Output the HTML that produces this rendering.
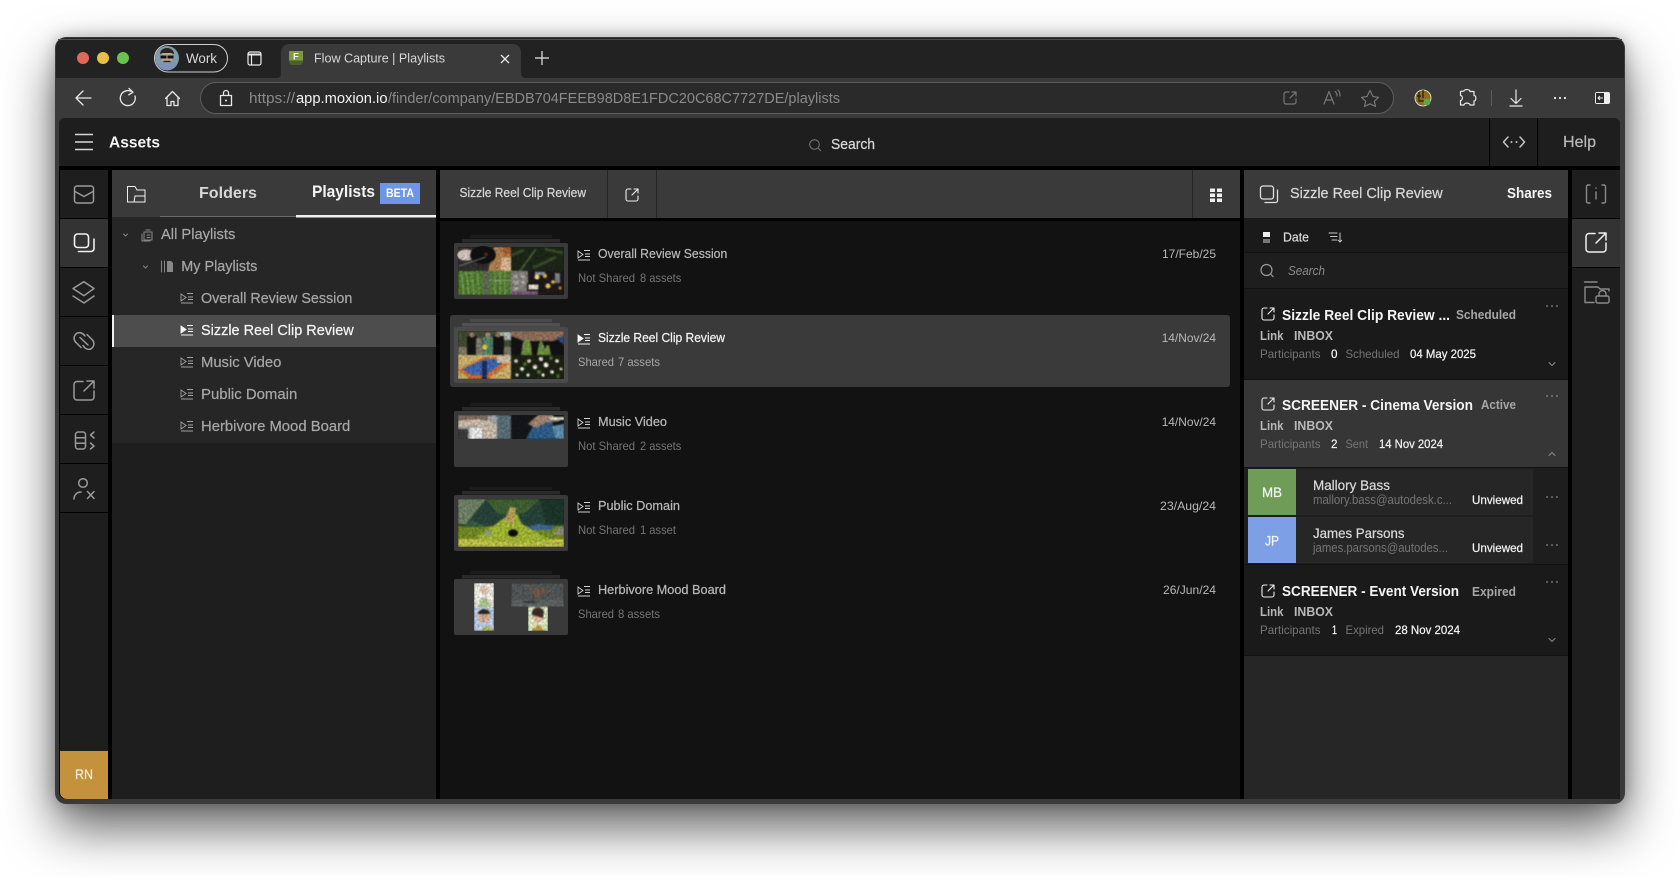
<!DOCTYPE html>
<html lang="en"><head><meta charset="utf-8"><title>Flow Capture | Playlists</title>
<style>
html,body{margin:0;padding:0;width:1680px;height:877px;overflow:hidden;background:#fff}
#w{position:absolute;left:55px;top:37px;width:1570px;height:767px;border-radius:11px;background:#3a3a3a;box-shadow:0 24px 50px rgba(0,0,0,.62),0 0 16px rgba(0,0,0,.25)}
svg{position:absolute;left:0;top:0}
text{font-family:"Liberation Sans",sans-serif;stroke-width:0}
.m{stroke-width:.22}
.b{font-weight:700}
.i{font-style:italic}
.wh{fill:#f4f4f4;stroke:#f4f4f4}
.l1{fill:#d8d8d8;stroke:#d8d8d8}
.l2{fill:#b8b8b8;stroke:#b8b8b8}
.l3{fill:#a6a6a6;stroke:#a6a6a6}
.g1{fill:#8a8a8a;stroke:#8a8a8a}
.g2{fill:#757575;stroke:#757575}
.ic{fill:none;stroke-linecap:round;stroke-linejoin:round}
</style></head><body>
<div id="w"></div>
<svg width="1680" height="877" viewBox="0 0 1680 877" xmlns="http://www.w3.org/2000/svg">
<defs>
<filter id="s" x="0" y="0" width="100%" height="100%" color-interpolation-filters="sRGB">
<feGaussianBlur in="SourceGraphic" stdDeviation=".7" result="bl"/>
<feTurbulence type="fractalNoise" baseFrequency=".4" numOctaves="2" seed="4" result="tn"/>
<feColorMatrix in="tn" type="matrix" values="1 0 0 0 0  1 0 0 0 0  1 0 0 0 0  0 0 0 0 1" result="gn"/>
<feComposite in="bl" in2="gn" operator="arithmetic" k1="0.55" k2="0.72" k3="0" k4="0" result="tx"/>
<feComposite in="tx" in2="SourceAlpha" operator="in"/>
</filter>
<g id="pl"><path d="M0 -4L5 -.5L0 3Z"/><path d="M6 -4.500H12M7 -1H12M7 1.500H12M0 5H12" fill="none"/></g>
<g id="sh" class="ic"><path d="M5 0H2A2 2 0 0 0 0 2V10A2 2 0 0 0 2 12H10A2 2 0 0 0 12 10V7"/><path d="M6 6L12 0M8 0H12V4"/></g>
</defs>

<!-- browser chrome -->
<path d="M56 48a10 10 0 0 1 10-10H1614a10 10 0 0 1 10 10V78H56Z" fill="#222"/>
<path d="M58 39.500H1622" stroke="#4d4d4d" stroke-width="1"/>
<path d="M278 78a5 5 0 0 0 3-5V52a8 8 0 0 1 8-8H513a8 8 0 0 1 8 8V73a5 5 0 0 0 4 5Z" fill="#3a3a3a"/>
<circle cx="83" cy="58" r="6" fill="#e0695a"/><circle cx="103" cy="58" r="6" fill="#e8bf45"/><circle cx="123" cy="58" r="6" fill="#6cc24f"/>
<rect x="154.500" y="44.500" width="73" height="27.500" rx="13.700" fill="#222" stroke="#cfcfcf"/>
<circle cx="167" cy="58" r="12" fill="#7f9aa8"/><path d="M157 65a11 8 0 0 1 20 0a12 12 0 0 1-20 0Z" fill="#7d93b8"/><circle cx="167" cy="57" r="6" fill="#c2a48c"/><path d="M160 54a7 6 0 0 1 14 0l-3-1h-8Z" fill="#2b2420"/><path d="M160.500 55.500h6v3h-6zM167.500 55.500h6v3h-6z" fill="#111"/><path d="M163.500 61.500h7" stroke="#2b2420" stroke-width="1.500"/>
<text x="186" y="63" font-size="14" textLength="31" lengthAdjust="spacingAndGlyphs" class="l1">Work</text>
<rect x="248" y="52" width="13" height="13" rx="2" fill="none" stroke="#e8e8e8" stroke-width="1.200"/><path d="M248 54.500H261" stroke="#e8e8e8" stroke-width="2"/><path d="M251.500 55V65" stroke="#e8e8e8" stroke-width="1.200"/>
<path d="M289 51H303V62L301 65H291L289 62Z" fill="#7f9a3e"/><path d="M289 60.500H303V62L301 65H291L289 62Z" fill="#4a5f2a"/><text x="293" y="59.500" font-size="9.500" class="b wh">F</text>
<text x="314" y="62.500" font-size="13" textLength="131" lengthAdjust="spacingAndGlyphs" class="l1">Flow Capture | Playlists</text>
<path d="M501 55L509 63M509 55L501 63" stroke="#e8e8e8" stroke-width="1.300" fill="none"/>
<path d="M542 51V65M535 58H549" stroke="#e8e8e8" stroke-width="1.200" fill="none"/>

<rect x="56" y="78" width="1568" height="46" fill="#3a3a3a"/>
<rect x="200.500" y="82.500" width="1193" height="31" rx="15.500" fill="#2a2a2a" stroke="#5d5d5d"/>
<g class="ic" stroke="#e8e8e8" stroke-width="1.300">
<path d="M76 98H91M83 91L76 98L83 105"/>
<path d="M135 96A7.500 7.500 0 1 1 131 91.300M129 88.500L133 92.200L128.800 94.800"/>
<path d="M165.500 98.500L172.500 91.500L179.500 98.500M167 97.500V105.500H171V101.500H174V105.500H178V97.500"/>
<path d="M220.500 95.500H231.500V105.500H220.500ZM223.500 95.500V93A2.500 2.500 0 0 1 228.500 93V95.500"/>
</g>
<circle cx="226" cy="100.500" r="1" fill="#e8e8e8"/>
<text x="249" y="103" font-size="14.500" textLength="46" lengthAdjust="spacingAndGlyphs" class="g1">https://</text>
<text x="296" y="103" font-size="14.500" textLength="91.500" lengthAdjust="spacingAndGlyphs" class="wh">app.moxion.io</text>
<text x="388" y="103" font-size="14.500" textLength="452" lengthAdjust="spacingAndGlyphs" class="g1">/finder/company/EBDB704FEEB98D8E1FDC20C68C7727DE/playlists</text>
<g class="ic" stroke="#777" stroke-width="1.200">
<path d="M1289 92H1286A2 2 0 0 0 1284 94V102A2 2 0 0 0 1286 104H1294A2 2 0 0 0 1296 102V99M1290 98L1296 92M1292 92H1296V96"/>
<path d="M1324 104L1329 91.500L1334 104M1326 100H1332M1335 91.500A5 5 0 0 1 1337 96M1338 90A8 8 0 0 1 1340 96"/>
<path d="M1370 90.500L1373 96.500L1378.500 97.300L1374.300 101.300L1375.500 106.500L1370 103.800L1364.500 106.500L1365.700 101.300L1361.500 97.300L1367 96.500Z"/>
</g>
<circle cx="1423" cy="98" r="8" fill="#8f6e18" stroke="#eee" stroke-width=".8"/><path d="M1419 92V101H1427M1423 90V98M1417 96H1421" stroke="#1a1a1a" stroke-width="1.200" fill="none"/><circle cx="1427" cy="102" r="3.500" fill="#5fa64c"/>
<path class="ic" stroke="#e8e8e8" stroke-width="1.200" d="M1464 91C1464 89 1470 89 1470 91.500H1474V95.500C1476.500 95.500 1476.500 101 1474 101V105H1470C1470 102.500 1464 102.500 1464 105H1460.500V100.500C1463 100.500 1463 95.500 1460.500 95.500V91.500Z"/>
<path d="M1491.500 90V106" stroke="#5d5d5d"/>
<path class="ic" stroke="#e8e8e8" stroke-width="1.200" d="M1516 90V103M1511 98.500L1516 103.500L1521 98.500M1510 106H1522"/>
<circle cx="1555" cy="98" r="1.100" fill="#eee"/><circle cx="1560" cy="98" r="1.100" fill="#eee"/><circle cx="1565" cy="98" r="1.100" fill="#eee"/>
<rect x="1595" y="92" width="15" height="12" rx="2" fill="#eee"/><rect x="1596" y="93" width="8" height="10" fill="#2a2a2a"/><path d="M1603 98H1598M1600 96L1598 98L1600 100" stroke="#eee" fill="none"/>

<!-- app -->
<path d="M59 124a6 6 0 0 1 6-6H1614a6 6 0 0 1 6 6V799H66a7 7 0 0 1-7-7Z" fill="#000"/>
<path d="M59 124a6 6 0 0 1 6-6H1614a6 6 0 0 1 6 6V166H59Z" fill="#1e1e1e"/>
<path d="M75 134.500H93M75 142H93M75 149.500H93" stroke="#d8d8d8" stroke-width="1.500"/>
<text x="109" y="147.500" font-size="16" textLength="51" lengthAdjust="spacingAndGlyphs" class="b wh">Assets</text>
<circle cx="814.500" cy="144.500" r="4.800" fill="none" stroke="#777"/><path d="M818 148L821 151" stroke="#777"/>
<text x="831" y="149" font-size="14.500" textLength="44" lengthAdjust="spacingAndGlyphs" class="m l1">Search</text>
<path d="M1489.500 118V166M1537.500 118V166" stroke="#000"/>
<path class="ic" stroke="#c4c4c4" stroke-width="1.500" d="M1508 137L1503.500 142L1508 147M1520 137L1524.500 142L1520 147"/><circle cx="1511.500" cy="142" r="1" fill="#c4c4c4"/><circle cx="1516.500" cy="142" r="1" fill="#c4c4c4"/>
<text x="1563" y="147" font-size="15.500" textLength="33" lengthAdjust="spacingAndGlyphs" class="m l2">Help</text>

<!-- left rail -->
<path d="M60 170H108V799H67a7 7 0 0 1-7-7Z" fill="#1e1e1e"/>
<rect x="60" y="219" width="48" height="48" fill="#333"/>
<path d="M60 218.500H108M60 267.500H108M60 316.500H108M60 365.500H108M60 414.500H108M60 463.500H108M60 512.500H108" stroke="#000"/>
<g class="ic" stroke="#9a9a9a" stroke-width="1.500">
<rect x="74.500" y="186" width="19" height="17" rx="2.500"/><path d="M75 191.500L84 196.500L93 191.500"/>
<path d="M84 281.700L94 288.500L84 295.700L73 288.500ZM73 296L84 303L94 296"/>
<path d="M85 336C83 333 79 331.500 76.500 333.500C73.500 336 73.500 339.500 75.500 342L81 347.500M83 345.500C85 349 89 350.500 91.500 348.500C94.500 346 94.500 342.500 92.500 340L87 334.500M80 337.500L88 345"/>
<path d="M83 381.500H77A3 3 0 0 0 74 384.500V397A3 3 0 0 0 77 400H91A3 3 0 0 0 94 397V391M84 391L94 381M87 381H94V388"/>
<rect x="75.500" y="432" width="10" height="17" rx="2.500"/><path d="M75.500 437.700H85.500M75.500 443.300H85.500M94 432L90.500 435L94 438M90.500 443L94 446L90.500 449"/>
<circle cx="83" cy="483" r="4.300"/><path d="M74 499C74 495 77 492 81 492M87.500 491.500L94 498.500M94 491.500L87.500 498.500"/>
</g>
<g class="ic" stroke="#f0f0f0" stroke-width="1.600"><rect x="74.500" y="234" width="14" height="13.500" rx="3"/><path d="M94 239V248.500A3 3 0 0 1 91 251.500H78.500"/></g>
<path d="M60 751H108V799H67a7 7 0 0 1-7-7Z" fill="#c4913c"/>
<text x="75" y="779" font-size="14" textLength="18" lengthAdjust="spacingAndGlyphs" class="m" fill="#f2ead9" stroke="#f2ead9">RN</text>

<!-- left panel -->
<rect x="112" y="170" width="324" height="629" fill="#1e1e1e"/>
<rect x="112" y="170" width="324" height="47" fill="#3a3a3a"/>
<rect x="112" y="217" width="324" height="226" fill="#262626"/>
<path d="M160 216.500H296" stroke="#6a6a6a"/><rect x="296" y="215" width="140" height="2.500" fill="#f0f0f0"/>
<g class="ic" stroke="#f0f0f0"><path d="M127.500 202V186.500H135L137 190H145V202ZM134 202L135 196H145"/></g>
<text x="199" y="198" font-size="16" textLength="58" lengthAdjust="spacingAndGlyphs" class="b l1">Folders</text>
<text x="312" y="197" font-size="17" textLength="63" lengthAdjust="spacingAndGlyphs" class="b wh">Playlists</text>
<rect x="380" y="183" width="40" height="21" fill="#6d96e8"/>
<text x="386" y="197" font-size="11.500" textLength="28" lengthAdjust="spacingAndGlyphs" class="b" fill="#fff">BETA</text>
<rect x="112" y="315" width="324" height="32" fill="#4d4d4d"/><rect x="112" y="315" width="2" height="32" fill="#f0f0f0"/>
<g class="ic" stroke="#888"><path d="M123.500 234L125.500 236L127.500 234M143.500 266L145.500 268L147.500 266"/>
<path d="M144 232H152V240H144ZM142 234V241H150M147 235H150M147 237.500H150M146 230H150"/>
<path d="M161.500 261V272M164.500 261V272"/></g>
<path d="M167 261H171L173 263V272H167Z" fill="#888"/>
<text x="161" y="239" font-size="14.500" textLength="74.300" lengthAdjust="spacingAndGlyphs" class="m l3">All Playlists</text>
<text x="181.300" y="271" font-size="14.500" textLength="76" lengthAdjust="spacingAndGlyphs" class="m l3">My Playlists</text>
<text x="201" y="303" font-size="14.500" textLength="151.300" lengthAdjust="spacingAndGlyphs" class="m l3">Overall Review Session</text>
<text x="201" y="335" font-size="14.500" textLength="152.700" lengthAdjust="spacingAndGlyphs" class="m wh">Sizzle Reel Clip Review</text>
<text x="201" y="367" font-size="14.500" textLength="80.300" lengthAdjust="spacingAndGlyphs" class="m l3">Music Video</text>
<text x="201" y="399" font-size="14.500" textLength="96.300" lengthAdjust="spacingAndGlyphs" class="m l3">Public Domain</text>
<text x="201" y="431" font-size="14.500" textLength="149.300" lengthAdjust="spacingAndGlyphs" class="m l3">Herbivore Mood Board</text>
<g stroke="#a0a0a0" fill="none" stroke-width=".9">
<use href="#pl" x="181" y="298"/><use href="#pl" x="181" y="362"/><use href="#pl" x="181" y="394"/><use href="#pl" x="181" y="426"/>
</g>
<use href="#pl" x="181" y="330" stroke="#f4f4f4" fill="#f4f4f4" stroke-width=".9"/>

<!-- center panel -->
<rect x="440" y="170" width="800" height="629" fill="#121212"/>
<rect x="440" y="170" width="800" height="48" fill="#3a3a3a"/>
<rect x="440" y="218" width="800" height="3" fill="#000"/>
<path d="M607.500 170V218M656.500 170V218M1192.500 170V218" stroke="#262626"/>
<text x="459.500" y="197" font-size="13" textLength="126.500" lengthAdjust="spacingAndGlyphs" class="m l1">Sizzle Reel Clip Review</text>
<use href="#sh" x="626" y="189" stroke="#eee" stroke-width="1.100"/>
<g fill="#f0f0f0"><rect x="1210" y="188.500" width="5" height="3.500"/><rect x="1217" y="188.500" width="5" height="3.500"/><rect x="1210" y="193.500" width="5" height="3.500"/><rect x="1217" y="193.500" width="5" height="3.500"/><rect x="1210" y="198.500" width="5" height="3.500"/><rect x="1217" y="198.500" width="5" height="3.500"/></g>
<rect x="450" y="315" width="780" height="72" rx="3" fill="#3a3a3a"/>

<g fill="#1c1c1c"><rect x="470" y="235" width="82" height="3"/><rect x="470" y="319" width="82" height="3" fill="#4a4a4a"/><rect x="470" y="403" width="82" height="3"/><rect x="470" y="487" width="82" height="3"/><rect x="470" y="571" width="82" height="3"/></g>
<g fill="#2a2a2a"><rect x="462" y="239" width="98" height="3.500"/><rect x="462" y="323" width="98" height="3.500" fill="#515151"/><rect x="462" y="407" width="98" height="3.500"/><rect x="462" y="491" width="98" height="3.500"/><rect x="462" y="575" width="98" height="3.500"/></g>
<g fill="#3a3a3a"><rect x="454" y="243" width="114" height="56" rx="2"/><rect x="454" y="327" width="114" height="56" rx="2" fill="#4a4a4a"/><rect x="454" y="411" width="114" height="56" rx="2"/><rect x="454" y="495" width="114" height="56" rx="2"/><rect x="454" y="579" width="114" height="56" rx="2"/></g>

<g filter="url(#s)">
<!-- thumb 1 -->
<rect x="458" y="247" width="53" height="24" fill="#2e2d2b"/>
<path d="M494 247H511V271H488Z" fill="#a87a4c"/><rect x="501" y="258" width="10" height="13" fill="#cfae88"/><rect x="503" y="247" width="8" height="7" fill="#a4582a"/>
<ellipse cx="466" cy="255" rx="9" ry="5.500" fill="#cdbfb8"/><ellipse cx="483" cy="255" rx="13" ry="9" fill="#0f0f0f"/><path d="M459 266L486 257" stroke="#8a8a8a" stroke-width=".8"/><circle cx="486" cy="254" r="1.500" fill="#7a2a20"/>
<rect x="511" y="247" width="53" height="24" fill="#1b2416"/><path d="M520 271L536 249" stroke="#4f6236" stroke-width="1.500"/><path d="M533 268L556 257M512 255L524 250M545 249L563 253" stroke="#35472a" stroke-width="3"/>
<rect x="458" y="271" width="53" height="24" fill="#4f7430"/><path d="M461 271L464 295M466 271L469 295M471 271L474 295M477 271L479 295M495 271V295M500 271V295M505 271V295" stroke="#6e9a48" stroke-width="1.400"/><rect x="484" y="271" width="4.500" height="24" fill="#5d625a"/><path d="M488 280.500H511" stroke="#8a8f88"/>
<rect x="511" y="271" width="53" height="24" fill="#1c1819"/><rect x="511" y="271" width="17" height="24" fill="#7d7a76"/><path d="M514 275h4v3h-4zM521 275h4v3h-4zM514 281h4v3h-4zM521 281h4v3h-4zM514 287h4v3h-4z" fill="#a9a7a0"/>
<rect x="527" y="283" width="13" height="8" fill="#0e0e0e"/><rect x="528.500" y="284.500" width="10" height="5" fill="#d4cfc0"/><rect x="511" y="291" width="27" height="4" fill="#7a5578"/>
<rect x="535" y="272" width="10" height="3" fill="#8f9aa8"/><circle cx="537" cy="277" r="2.500" fill="#e8d070"/><circle cx="545" cy="276" r="2" fill="#d9a53e"/><circle cx="548" cy="286" r="2.500" fill="#eac650"/><circle cx="553" cy="282" r="1.800" fill="#e8c050"/><rect x="555" y="273" width="5" height="10" fill="#777a7c"/><circle cx="560" cy="288" r="1.500" fill="#c88a30"/>
<!-- thumb 2 -->
<rect x="458" y="331" width="53" height="24" fill="#3f4632"/><rect x="458" y="347" width="53" height="8" fill="#77735e"/><rect x="497" y="332" width="14" height="8" fill="#a6b0a4"/>
<path d="M467 336h10v19h-10zM493 336h11v19h-11z" fill="#131313"/><rect x="476" y="338" width="6" height="17" fill="#77776a"/><rect x="483" y="337" width="10" height="18" fill="#4f7c66"/><circle cx="472" cy="335" r="2.500" fill="#9a7a60"/><circle cx="488" cy="335" r="2.500" fill="#a88a70"/><circle cx="498" cy="335" r="2.500" fill="#8a6a50"/><circle cx="485" cy="347" r="2.500" fill="#d8c040"/>
<rect x="511" y="331" width="53" height="24" fill="#111112"/><path d="M511 331H564V337L553 341L524 341L511 336Z" fill="#8a6a58"/><path d="M556 338L564 336V345Z" fill="#2a4a78"/><path d="M521 355L523 342L528 338L531 344L532 355ZM537 355L539 344L541 340L544 346L546 355ZM543 355L546 346L549 345L551 355Z" fill="#6a8a40"/>
<rect x="458" y="355" width="53" height="24" fill="#c2a868"/><path d="M458 370L484 357H511V362L488 379H470Z" fill="#c8682e"/><path d="M462 369L485 359H508L486 375H472Z" fill="#3b62a8"/><rect x="482" y="361" width="5" height="18" fill="#1c2a58"/><rect x="497" y="355" width="14" height="8" fill="#c4b59c"/>
<rect x="511" y="355" width="53" height="24" fill="#1b2012"/>
<g fill="#e4e2d4"><circle cx="516" cy="361" r="1.800"/><circle cx="522" cy="369" r="2"/><circle cx="529" cy="361" r="1.800"/><circle cx="535" cy="367" r="2.200"/><circle cx="541" cy="359" r="2"/><circle cx="546" cy="365" r="2.500"/><circle cx="552" cy="372" r="1.800"/><circle cx="557" cy="361" r="1.800"/><circle cx="528" cy="375" r="1.600"/><circle cx="543" cy="375" r="1.600"/><circle cx="561" cy="369" r="1.400"/><circle cx="517" cy="375" r="1.500"/></g>
<g fill="#4f7030"><circle cx="525" cy="364" r="1.800"/><circle cx="539" cy="372" r="2"/><circle cx="551" cy="358" r="1.800"/><circle cx="558" cy="376" r="1.800"/></g>
<!-- thumb 3 -->
<rect x="458" y="415" width="53" height="24" fill="#9a9e9c"/><rect x="458" y="415" width="30" height="6" fill="#7a6a5c"/><path d="M458 421L478 419L492 422L500 428L494 439H484L478 426L458 427Z" fill="#c0b2a2"/><rect x="458" y="429" width="10" height="10" fill="#3a3a3a"/><rect x="470" y="428" width="12" height="11" fill="#dedede"/><rect x="497" y="415" width="14" height="24" fill="#566a72"/>
<rect x="511" y="415" width="53" height="24" fill="#141518"/><path d="M526 439L534 424L552 422L556 439Z" fill="#2c5a84"/><path d="M528 424L538 415H552L560 421L545 423L536 428Z" fill="#9a7e6c"/><path d="M552 426L564 424V439H556Z" fill="#5a8aa8"/><path d="M548 417H564V420H552Z" fill="#cfd8c4"/>
<!-- thumb 4 -->
<rect x="458" y="499" width="106" height="48" fill="#254036"/>
<path d="M458 499H486L466 524H458Z" fill="#6a7c62"/><path d="M486 499H540L524 514H498Z" fill="#3d5c30"/><path d="M540 499H564V524H546Z" fill="#1b3328"/>
<rect x="458" y="526" width="106" height="21" fill="#6f8422"/><rect x="458" y="539" width="106" height="8" fill="#b4b844"/>
<path d="M461 527L472 520L488 527Z" fill="#35593a"/><path d="M526 527L538 524L556 527L550 530H530Z" fill="#3d6490"/>
<path d="M476 538C488 530 498 522 509 515L517 514L522 524C532 530 540 535 552 540C530 544 500 543 476 538Z" fill="#9aae30"/>
<path d="M504 522L510 507L516 508L514 524Z" fill="#b09a54"/><ellipse cx="513" cy="533" rx="5" ry="3.800" fill="#0d0d0d"/><ellipse cx="488" cy="533" rx="4" ry="2" fill="#8f8f88"/><path d="M552 535L560 527L564 527V535Z" fill="#8a8678"/>
<!-- thumb 5 -->
<rect x="474" y="583" width="20" height="24" fill="#e2e2da"/><circle cx="484" cy="590" r="4" fill="#d4b8a0"/><path d="M478 607L481 598H488L491 607Z" fill="#a8bc88"/>
<rect x="474" y="607" width="20" height="24" fill="#b4c6de"/><circle cx="484" cy="617" r="6" fill="#c8a48c"/><path d="M478 614a6 5 0 0 1 12 0Z" fill="#2a2620"/><path d="M480 631L488 625L494 631Z" fill="#a8b060"/>
<rect x="528" y="607" width="20" height="24" fill="#d4e2bc"/><circle cx="538" cy="617" r="5.500" fill="#d8b09c"/><path d="M532 615a6 6 0 0 1 12-3l-1 6Z" fill="#3a2a22"/><path d="M531 631L538 624L546 631Z" fill="#b49a48"/>
<rect x="511" y="583" width="53" height="24" rx="1" fill="#4d5252"/><rect x="511" y="600" width="53" height="7" fill="#5a5e5e"/>
<path d="M525 584L534 589L541 588L553 592L541 594L538 601L535 596L531 591Z" fill="#6a5444"/><ellipse cx="530" cy="602" rx="8" ry="1" fill="#333"/>
</g>

<!-- center text -->
<g stroke="#d0d0d0" stroke-width=".9" fill="none"><use href="#pl" x="578" y="255"/><use href="#pl" x="578" y="423"/><use href="#pl" x="578" y="507"/><use href="#pl" x="578" y="591"/></g>
<use href="#pl" x="578" y="339" stroke="#f4f4f4" fill="#f4f4f4" stroke-width=".9"/>
<g font-size="13">
<text x="598" y="258" textLength="129.300" lengthAdjust="spacingAndGlyphs" class="m l2">Overall Review Session</text>
<text x="598" y="342" textLength="127" lengthAdjust="spacingAndGlyphs" class="m wh">Sizzle Reel Clip Review</text>
<text x="598" y="426" textLength="69" lengthAdjust="spacingAndGlyphs" class="m l2">Music Video</text>
<text x="598" y="510" textLength="82" lengthAdjust="spacingAndGlyphs" class="m l2">Public Domain</text>
<text x="598" y="594" textLength="128" lengthAdjust="spacingAndGlyphs" class="m l2">Herbivore Mood Board</text>
</g>
<g font-size="12">
<text x="578" y="282" textLength="57" lengthAdjust="spacingAndGlyphs" class="g2">Not Shared</text><text x="640" y="282" textLength="41.300" lengthAdjust="spacingAndGlyphs" class="g2">8 assets</text>
<text x="578" y="366" textLength="36" lengthAdjust="spacingAndGlyphs" class="l3">Shared</text><text x="618" y="366" textLength="42" lengthAdjust="spacingAndGlyphs" class="l3">7 assets</text>
<text x="578" y="450" textLength="57" lengthAdjust="spacingAndGlyphs" class="g2">Not Shared</text><text x="640" y="450" textLength="41.300" lengthAdjust="spacingAndGlyphs" class="g2">2 assets</text>
<text x="578" y="534" textLength="57" lengthAdjust="spacingAndGlyphs" class="g2">Not Shared</text><text x="640" y="534" textLength="36" lengthAdjust="spacingAndGlyphs" class="g2">1 asset</text>
<text x="578" y="618" textLength="36" lengthAdjust="spacingAndGlyphs" class="g2">Shared</text><text x="618" y="618" textLength="42" lengthAdjust="spacingAndGlyphs" class="g2">8 assets</text>
<text x="1162" y="258" textLength="54" lengthAdjust="spacingAndGlyphs" class="l2">17/Feb/25</text>
<text x="1161.700" y="342" textLength="54.300" lengthAdjust="spacingAndGlyphs" class="l2">14/Nov/24</text>
<text x="1161.700" y="426" textLength="54.300" lengthAdjust="spacingAndGlyphs" class="l2">14/Nov/24</text>
<text x="1160" y="510" textLength="56" lengthAdjust="spacingAndGlyphs" class="l2">23/Aug/24</text>
<text x="1163" y="594" textLength="53" lengthAdjust="spacingAndGlyphs" class="l2">26/Jun/24</text>
</g>

<!-- right panel -->
<rect x="1244" y="170" width="324" height="629" fill="#262626"/>
<rect x="1244" y="170" width="324" height="48" fill="#3a3a3a"/>
<rect x="1244" y="218" width="324" height="34" fill="#1a1a1a"/>
<rect x="1244" y="252" width="324" height="37" fill="#1e1e1e"/>
<path d="M1244 252.500H1568M1244 288.500H1568" stroke="#111"/>
<g class="ic" stroke="#e0e0e0" stroke-width="1.300"><rect x="1260.500" y="186" width="13" height="13" rx="2.500"/><path d="M1277.500 190V200A2 2 0 0 1 1275.500 202.500H1265"/></g>
<text x="1290" y="198" font-size="15" textLength="152.700" lengthAdjust="spacingAndGlyphs" class="m l1">Sizzle Reel Clip Review</text>
<text x="1507" y="198" font-size="14.500" textLength="45" lengthAdjust="spacingAndGlyphs" class="b wh">Shares</text>
<rect x="1263" y="232" width="7" height="5" fill="#eee"/><rect x="1263" y="239" width="7" height="4" fill="#777"/>
<text x="1283" y="241.500" font-size="12.500" textLength="26" lengthAdjust="spacingAndGlyphs" class="m l1">Date</text>
<path class="ic" stroke="#c8c8c8" d="M1329 233H1337M1330.500 236.500H1337M1332 240H1337M1340 233V242M1338.300 240.300L1340 242L1341.700 240.300"/>
<circle cx="1266.500" cy="270" r="5.500" fill="none" stroke="#9a9a9a" stroke-width="1.200"/><path d="M1270.500 274L1273.500 277" stroke="#9a9a9a" stroke-width="1.200"/>
<text x="1288" y="275" font-size="12.500" textLength="37" lengthAdjust="spacingAndGlyphs" class="i g1">Search</text>

<rect x="1244" y="289" width="324" height="91" fill="#1a1a1a"/>
<rect x="1244" y="380" width="324" height="87" fill="#363636"/>
<rect x="1244" y="467" width="324" height="98" fill="#1e1e1e"/>
<rect x="1244" y="565" width="324" height="90" fill="#1a1a1a"/>
<path d="M1244 379.500H1568M1244 467.500H1568M1244 564.500H1568M1244 655.500H1568" stroke="#121212"/>
<rect x="1296" y="469" width="237" height="46" fill="#262626"/><rect x="1296" y="517" width="237" height="46" fill="#262626"/>
<rect x="1248" y="469" width="48" height="46" fill="#6f9c57"/><rect x="1248" y="517" width="48" height="46" fill="#7c9fe6"/>

<g stroke="#eee" stroke-width="1.100" fill="none"><use href="#sh" x="1262" y="308"/><use href="#sh" x="1262" y="398"/><use href="#sh" x="1262" y="585"/></g>
<g font-size="14.500" class="b wh">
<text x="1282" y="320" textLength="168" lengthAdjust="spacingAndGlyphs">Sizzle Reel Clip Review ...</text>
<text x="1282" y="410" textLength="191" lengthAdjust="spacingAndGlyphs">SCREENER - Cinema Version</text>
<text x="1282" y="596" textLength="177" lengthAdjust="spacingAndGlyphs">SCREENER - Event Version</text>
</g>
<g font-size="12.500" class="b l3">
<text x="1456" y="319" textLength="60" lengthAdjust="spacingAndGlyphs">Scheduled</text>
<text x="1481" y="409" textLength="35" lengthAdjust="spacingAndGlyphs">Active</text>
<text x="1472" y="596" textLength="44" lengthAdjust="spacingAndGlyphs">Expired</text>
</g>
<g font-size="12.500" class="b l2">
<text x="1260" y="340" textLength="23.500" lengthAdjust="spacingAndGlyphs">Link</text><text x="1294" y="340" textLength="39" lengthAdjust="spacingAndGlyphs">INBOX</text>
<text x="1260" y="430" textLength="23.500" lengthAdjust="spacingAndGlyphs">Link</text><text x="1294" y="430" textLength="39" lengthAdjust="spacingAndGlyphs">INBOX</text>
<text x="1260" y="616" textLength="23.500" lengthAdjust="spacingAndGlyphs">Link</text><text x="1294" y="616" textLength="39" lengthAdjust="spacingAndGlyphs">INBOX</text>
</g>
<g font-size="12">
<text x="1260" y="358" textLength="60.500" lengthAdjust="spacingAndGlyphs" class="g2">Participants</text>
<text x="1331" y="358" class="m wh" textLength="6.500" lengthAdjust="spacingAndGlyphs">0</text>
<text x="1345.500" y="358" textLength="54" lengthAdjust="spacingAndGlyphs" class="g2">Scheduled</text>
<text x="1410" y="358" textLength="66" lengthAdjust="spacingAndGlyphs" class="m wh">04 May 2025</text>
<text x="1260" y="448" textLength="60.500" lengthAdjust="spacingAndGlyphs" class="g2">Participants</text>
<text x="1331" y="448" class="m wh" textLength="6.500" lengthAdjust="spacingAndGlyphs">2</text>
<text x="1345.500" y="448" textLength="22.500" lengthAdjust="spacingAndGlyphs" class="g2">Sent</text>
<text x="1379" y="448" textLength="64" lengthAdjust="spacingAndGlyphs" class="m wh">14 Nov 2024</text>
<text x="1260" y="634" textLength="60.500" lengthAdjust="spacingAndGlyphs" class="g2">Participants</text>
<text x="1332" y="634" class="m wh" textLength="5" lengthAdjust="spacingAndGlyphs">1</text>
<text x="1345.500" y="634" textLength="38.500" lengthAdjust="spacingAndGlyphs" class="g2">Expired</text>
<text x="1395" y="634" textLength="65" lengthAdjust="spacingAndGlyphs" class="m wh">28 Nov 2024</text>
</g>
<text x="1262" y="497" font-size="14" textLength="20" lengthAdjust="spacingAndGlyphs" class="m wh">MB</text>
<text x="1265" y="545.500" font-size="14" textLength="14" lengthAdjust="spacingAndGlyphs" class="m wh">JP</text>
<text x="1313" y="490" font-size="14" textLength="77" lengthAdjust="spacingAndGlyphs" class="m l1">Mallory Bass</text>
<text x="1313" y="504" font-size="12.500" textLength="139" lengthAdjust="spacingAndGlyphs" class="g2">mallory.bass@autodesk.c...</text>
<text x="1472" y="504" font-size="12" textLength="51" lengthAdjust="spacingAndGlyphs" class="m wh">Unviewed</text>
<text x="1313" y="538" font-size="14" textLength="91.500" lengthAdjust="spacingAndGlyphs" class="m l1">James Parsons</text>
<text x="1313" y="552" font-size="12.500" textLength="135" lengthAdjust="spacingAndGlyphs" class="g2">james.parsons@autodes...</text>
<text x="1472" y="552" font-size="12" textLength="51" lengthAdjust="spacingAndGlyphs" class="m wh">Unviewed</text>
<g fill="#8a8a8a">
<circle cx="1547" cy="306" r=".9"/><circle cx="1552" cy="306" r=".9"/><circle cx="1557" cy="306" r=".9"/>
<circle cx="1547" cy="396" r=".9"/><circle cx="1552" cy="396" r=".9"/><circle cx="1557" cy="396" r=".9"/>
<circle cx="1547" cy="497" r=".9"/><circle cx="1552" cy="497" r=".9"/><circle cx="1557" cy="497" r=".9"/>
<circle cx="1547" cy="545" r=".9"/><circle cx="1552" cy="545" r=".9"/><circle cx="1557" cy="545" r=".9"/>
<circle cx="1547" cy="582" r=".9"/><circle cx="1552" cy="582" r=".9"/><circle cx="1557" cy="582" r=".9"/>
</g>
<path class="ic" stroke="#8a8a8a" d="M1549 362.500L1552 365.500L1555 362.500M1549 455.500L1552 452.500L1555 455.500M1549 638.500L1552 641.500L1555 638.500"/>

<!-- right rail -->
<rect x="1572" y="170" width="48" height="629" fill="#1e1e1e"/>
<rect x="1572" y="219" width="48" height="48" fill="#333"/>
<path d="M1572 218.500H1620M1572 267.500H1620" stroke="#000"/>
<g class="ic" stroke="#8a8a8a" stroke-width="1.400">
<path d="M1590 185H1588A1.500 1.500 0 0 0 1586.500 186.500V201.500A1.500 1.500 0 0 0 1588 203H1590M1602 185H1604A1.500 1.500 0 0 1 1605.500 186.500V201.500A1.500 1.500 0 0 1 1604 203H1602M1596 192V199M1596 188V188.200"/>
<path d="M1584.500 282H1597M1585 302.500V287H1598L1600 289H1609V291M1585 302.500H1594"/>
<rect x="1596" y="296" width="13" height="7" rx="1.500"/><path d="M1599 296V294A3.500 3.500 0 0 1 1606 294V296"/>
</g>
<path class="ic" stroke="#f0f0f0" stroke-width="1.500" d="M1595 233.500H1589A3 3 0 0 0 1586 236.500V249A3 3 0 0 0 1589 252H1603A3 3 0 0 0 1606 249V243M1596 243L1606 233M1599 233H1606V240"/>
</svg>
</body></html>
